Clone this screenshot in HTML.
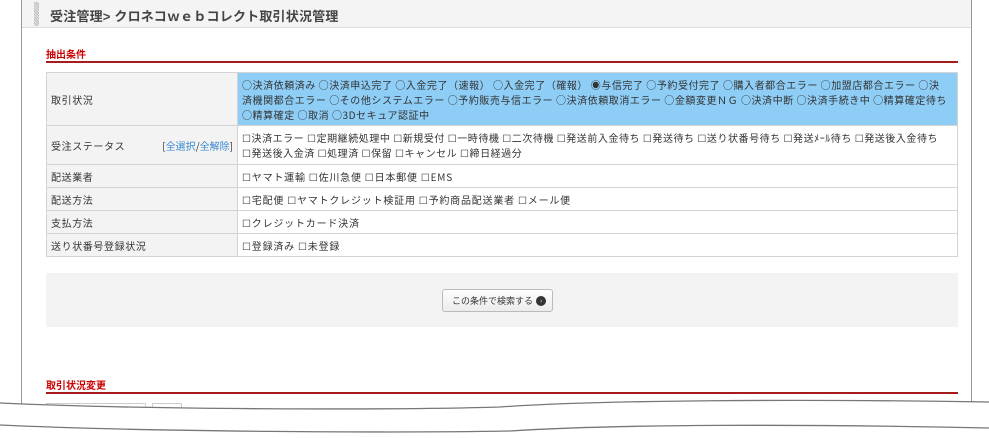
<!DOCTYPE html>
<html><head><meta charset="utf-8"><style>
*{margin:0;padding:0;box-sizing:border-box}
body{width:989px;height:438px;background:#fff;position:relative;overflow:hidden;font-family:"Liberation Sans","Noto Sans CJK JP",sans-serif;color:#333}
.frame{position:absolute;left:21px;top:0;width:951px;height:420px;border-left:1px solid #999;border-right:1px solid #999;background:#fff}
.hdr{position:absolute;left:22px;top:0;width:949px;height:28px;background:#f4f4f4;border-bottom:1px solid #ddd}
.stripe{position:absolute;left:34px;top:2px;width:5px;height:24px;background:repeating-linear-gradient(45deg,#bbb 0 1px,#e8e8e8 1px 2px)}
.title{position:absolute;left:50px;top:6px;font-size:13px;font-weight:bold;color:#444;letter-spacing:0.2px}
.h2{position:absolute;left:46px;font-size:10px;font-weight:bold;color:#c00}
.rl{position:absolute;left:46px;width:912px;height:2px;background:#a61b1b}
table{position:absolute;left:46px;top:72px;width:912px;border-collapse:collapse;font-size:10px;letter-spacing:0.8px;font-family:"Noto Sans CJK JP","Liberation Sans",sans-serif;table-layout:fixed}
td{border:1px solid #d4d4d4;padding:1px 4px;vertical-align:middle;line-height:15px;white-space:nowrap;overflow:hidden}
td.t{letter-spacing:0.55px}
td.l{background:#f3f3f3;width:191px;color:#333;letter-spacing:0.6px}
.blue{background:#8ecdf6}
.lnk{float:right;color:#333;letter-spacing:0}.lnk a{color:#3a8ad0;text-decoration:none}
.sbox{position:absolute;left:46px;top:273px;width:912px;height:54px;background:#f3f3f4}
.btn{position:absolute;left:442px;top:289px;width:111px;height:23px;border:1px solid #bbb;border-radius:3px;background:linear-gradient(#fdfdfd,#ececec);font-size:9px;line-height:21px;padding-left:9px;color:#333;font-family:"Noto Sans CJK JP",sans-serif}
.btn i{position:absolute;left:93px;top:6px;width:10px;height:10px;border-radius:50%;background:#333;color:#fff;font-size:7px;line-height:10px;text-align:center;font-style:normal}
</style></head><body>
<div class="frame"></div>
<div class="hdr"></div><div class="stripe"></div>
<div class="title">受注管理&gt; クロネコｗｅｂコレクト取引状況管理</div>
<div class="h2" style="top:46px">抽出条件</div>
<div class="rl" style="top:61px"></div>
<table>
<colgroup><col style="width:191px"><col></colgroup>
<tr style="height:53px"><td class="l">取引状況</td><td class="blue t">○決済依頼済み ○決済申込完了 ○入金完了（速報） ○入金完了（確報） ◉与信完了 ○予約受付完了 ○購入者都合エラー ○加盟店都合エラー ○決<br>済機関都合エラー ○その他システムエラー ○予約販売与信エラー ○決済依頼取消エラー ○金額変更ＮＧ ○決済中断 ○決済手続き中 ○精算確定待ち<br>○精算確定 ○取消 ○3Dセキュア認証中</td></tr>
<tr style="height:39px"><td class="l">受注ステータス <span class="lnk">[<a>全選択</a>/<a>全解除</a>]</span></td><td class="t">☐決済エラー ☐定期継続処理中 ☐新規受付 ☐一時待機 ☐二次待機 ☐発送前入金待ち ☐発送待ち ☐送り状番号待ち ☐発送ﾒｰﾙ待ち ☐発送後入金待ち<br>☐発送後入金済 ☐処理済 ☐保留 ☐キャンセル ☐締日経過分</td></tr>
<tr style="height:23px"><td class="l">配送業者</td><td>☐ヤマト運輸 ☐佐川急便 ☐日本郵便 ☐EMS</td></tr>
<tr style="height:23px"><td class="l">配送方法</td><td>☐宅配便 ☐ヤマトクレジット検証用 ☐予約商品配送業者 ☐メール便</td></tr>
<tr style="height:23px"><td class="l">支払方法</td><td>☐クレジットカード決済</td></tr>
<tr style="height:23px"><td class="l">送り状番号登録状況</td><td>☐登録済み ☐未登録</td></tr>
</table>
<div class="sbox"></div>
<div class="btn">この条件で検索する<i>›</i></div>
<div class="h2" style="top:377px">取引状況変更</div>
<div class="rl" style="top:392px"></div>
<div style="position:absolute;left:46px;top:403px;width:100px;height:10px;border:1px solid #ccc"></div>
<div style="position:absolute;left:152px;top:403px;width:30px;height:10px;border:1px solid #ccc"></div>
<svg style="position:absolute;left:0;top:0" width="989" height="438">
<path d="M0,403 C150,410 400,410 500,407 C600,400 800,399 989,402 L989,438 L0,438Z" fill="#fff"/>
<path d="M0,403 C150,410 400,410 500,407 C600,400 800,399 989,402" fill="none" stroke="#777" stroke-width="1.3"/>
<path d="M0,425 C150,432 400,433 510,431 C620,424 800,424 989,428" fill="none" stroke="#777" stroke-width="1.3"/>
</svg>
</body></html>
